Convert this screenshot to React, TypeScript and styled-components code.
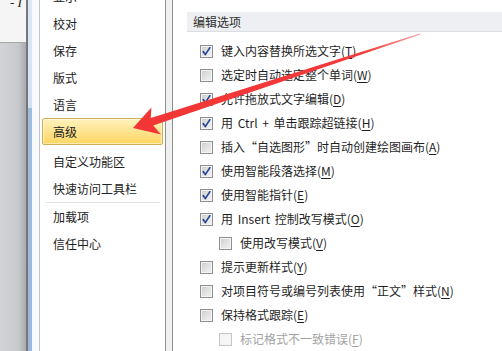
import React from "react";
import styled, { createGlobalStyle } from "styled-components";

const Global = createGlobalStyle`
  html, body { margin: 0; padding: 0; background: #fff; }
  body { font-family: "Noto Sans CJK SC", "Noto Sans", sans-serif; }
`;

const Page = styled.div`
  position: relative;
  width: 502px;
  height: 351px;
  overflow: hidden;
  display: flex;
  background: #fff;
  font-size: 12px;
  color: #1f1f1f;
`;

const DocStrip = styled.div`
  width: 26px;
  display: flex;
  flex-direction: column;
  overflow: hidden;
`;

const DocTop = styled.div`
  height: 47px;
  box-sizing: border-box;
  background: #f5f5f5;
  border-bottom: 1px solid #a7a7a7;
  font-family: "Liberation Serif", serif;
  font-style: italic;
  font-size: 13px;
  line-height: 13px;
  color: #222;
  padding-left: 10px;
  margin-top: -4px;
  white-space: nowrap;
`;

const DocGray = styled.div`
  flex: 1;
  background: linear-gradient(to right, #d2d4d7, #c7c9cc 70%, #a8aaad);
`;

const DarkLine = styled.div`
  width: 2px;
  background: #75777a;
`;

const BlueBar = styled.div`
  width: 4px;
  background: linear-gradient(to bottom, #dce8f5 0, #d2e1f2 108px, #9fbcdd 108px, #9ab8dc 100%);
`;

const Gutter = styled.div`
  width: 7px;
  background: #f8f9fa;
  border-right: 1px solid #c4c6c9;
`;

const Nav = styled.nav`
  width: 125px;
  background: #fff;
  overflow: hidden;
`;

const NavList = styled.div`
  margin-top: -17px;
  display: flex;
  flex-direction: column;
`;

const NavItem = styled.div<{ $active?: boolean }>`
  height: 27px;
  box-sizing: border-box;
  margin: 0 2px;
  padding-left: 10px;
  display: flex;
  align-items: center;
  border: 1px solid ${(p) => (p.$active ? "#cfae55" : "transparent")};
  border-radius: 2px;
  color: #222;
  background: ${(p) =>
    p.$active ? "linear-gradient(to bottom, #fff2bd 0%, #fee594 45%, #fdd663 100%)" : "transparent"};
  box-shadow: ${(p) => (p.$active ? "inset 0 0 0 1px rgba(255,255,255,0.5)" : "none")};
  margin-bottom: ${(p) => (p.$active ? "3px" : "0")};
`;

const NavSeparator = styled.div`
  height: 1px;
  margin: 0 5px;
  background: #e2e3e5;
`;

const Splitter = styled.div`
  width: 8px;
  box-sizing: border-box;
  border-left: 1px solid #8e9092;
  border-right: 1px solid #8e9092;
  background: #f0f0f0;
`;

const Content = styled.section`
  flex: 1;
  padding-top: 12px;
  padding-left: 14px;
  display: flex;
  flex-direction: column;
  min-width: 0;
`;

const SectionHeader = styled.div`
  height: 25px;
  box-sizing: border-box;
  background: #eeeff3;
  border-bottom: 1px solid #dcdde1;
  padding-left: 6px;
  display: flex;
  align-items: center;
  color: #2e2e2e;
`;

const Options = styled.div`
  margin-top: 7px;
  display: flex;
  flex-direction: column;
`;

const Row = styled.div<{ $indent?: boolean; $disabled?: boolean }>`
  height: 24px;
  display: flex;
  align-items: center;
  gap: 8px;
  padding-left: ${(p) => (p.$indent ? "32px" : "13px")};
  color: ${(p) => (p.$disabled ? "#a3a3a3" : "#1f1f1f")};
  white-space: nowrap;
`;

const Box = styled.span<{ $disabled?: boolean }>`
  width: 13px;
  height: 13px;
  box-sizing: border-box;
  flex: none;
  border: 1px solid ${(p) => (p.$disabled ? "#c6c6c6" : "#8e8f8f")};
  background: ${(p) =>
    p.$disabled
      ? "#f6f6f6"
      : "linear-gradient(135deg, #cdcdcd 0%, #e2e2e2 50%, #f3f3f3 100%)"};
  box-shadow: inset 0 0 0 1px #f4f4f4;
  display: flex;
  align-items: center;
  justify-content: center;
`;

const Label = styled.span`
  line-height: 1;
  word-spacing: 2px;
  u { text-underline-offset: 2px; }
`;

const ArrowLayer = styled.svg`
  position: absolute;
  left: 0;
  top: 0;
  pointer-events: none;
`;

const Check = () => (
  <svg width="11" height="11" viewBox="0 0 11 11">
    <path d="M2.2 5.6 L4.3 8.6 L8.9 1.6" fill="none" stroke="#26479a" strokeWidth="1.7" strokeLinejoin="round" strokeLinecap="round" />
  </svg>
);

type Opt = { text: string; key: string; checked?: boolean; indent?: boolean; disabled?: boolean };

const options: Opt[] = [
  { text: "键入内容替换所选文字(", key: "T", checked: true },
  { text: "选定时自动选定整个单词(", key: "W" },
  { text: "允许拖放式文字编辑(", key: "D", checked: true },
  { text: "用 Ctrl + 单击跟踪超链接(", key: "H", checked: true },
  { text: "插入“自选图形”时自动创建绘图画布(", key: "A" },
  { text: "使用智能段落选择(", key: "M", checked: true },
  { text: "使用智能指针(", key: "E", checked: true },
  { text: "用 Insert 控制改写模式(", key: "O", checked: true },
  { text: "使用改写模式(", key: "V", indent: true },
  { text: "提示更新样式(", key: "Y" },
  { text: "对项目符号或编号列表使用“正文”样式(", key: "N" },
  { text: "保持格式跟踪(", key: "E" },
  { text: "标记格式不一致错误(", key: "F", indent: true, disabled: true },
];

const navTop = ["显示", "校对", "保存", "版式", "语言"];
const navMid = ["自定义功能区", "快速访问工具栏"];
const navBottom = ["加载项", "信任中心"];

export default function App() {
  return (
    <>
      <Global />
      <Page>
        <DocStrip>
          <DocTop>- I</DocTop>
          <DocGray />
        </DocStrip>
        <DarkLine />
        <BlueBar />
        <Gutter />
        <Nav>
          <NavList>
            {navTop.map((n) => (
              <NavItem key={n}>{n}</NavItem>
            ))}
            <NavItem $active>高级</NavItem>
            {navMid.map((n) => (
              <NavItem key={n}>{n}</NavItem>
            ))}
            <NavSeparator />
            {navBottom.map((n) => (
              <NavItem key={n}>{n}</NavItem>
            ))}
          </NavList>
        </Nav>
        <Splitter />
        <Content>
          <SectionHeader>编辑选项</SectionHeader>
          <Options>
            {options.map((o, i) => (
              <Row key={i} $indent={o.indent} $disabled={o.disabled}>
                <Box $disabled={o.disabled}>{o.checked && <Check />}</Box>
                <Label>
                  {o.text}
                  <u>{o.key}</u>)
                </Label>
              </Row>
            ))}
          </Options>
        </Content>
        <ArrowLayer width="502" height="351" viewBox="0 0 502 351">
          <defs>
            <linearGradient id="shaft" x1="133" y1="128" x2="420" y2="34" gradientUnits="userSpaceOnUse">
              <stop offset="0" stopColor="#f23535" />
              <stop offset="0.8" stopColor="#f23a3a" />
              <stop offset="1" stopColor="#f7a0a0" />
            </linearGradient>
          </defs>
          <polygon
            points="133,128 151.4,107.5 150.8,118 420,33.6 420.3,34.6 153.2,125.6 161,134.5"
            fill="url(#shaft)"
          />
        </ArrowLayer>
      </Page>
    </>
  );
}
